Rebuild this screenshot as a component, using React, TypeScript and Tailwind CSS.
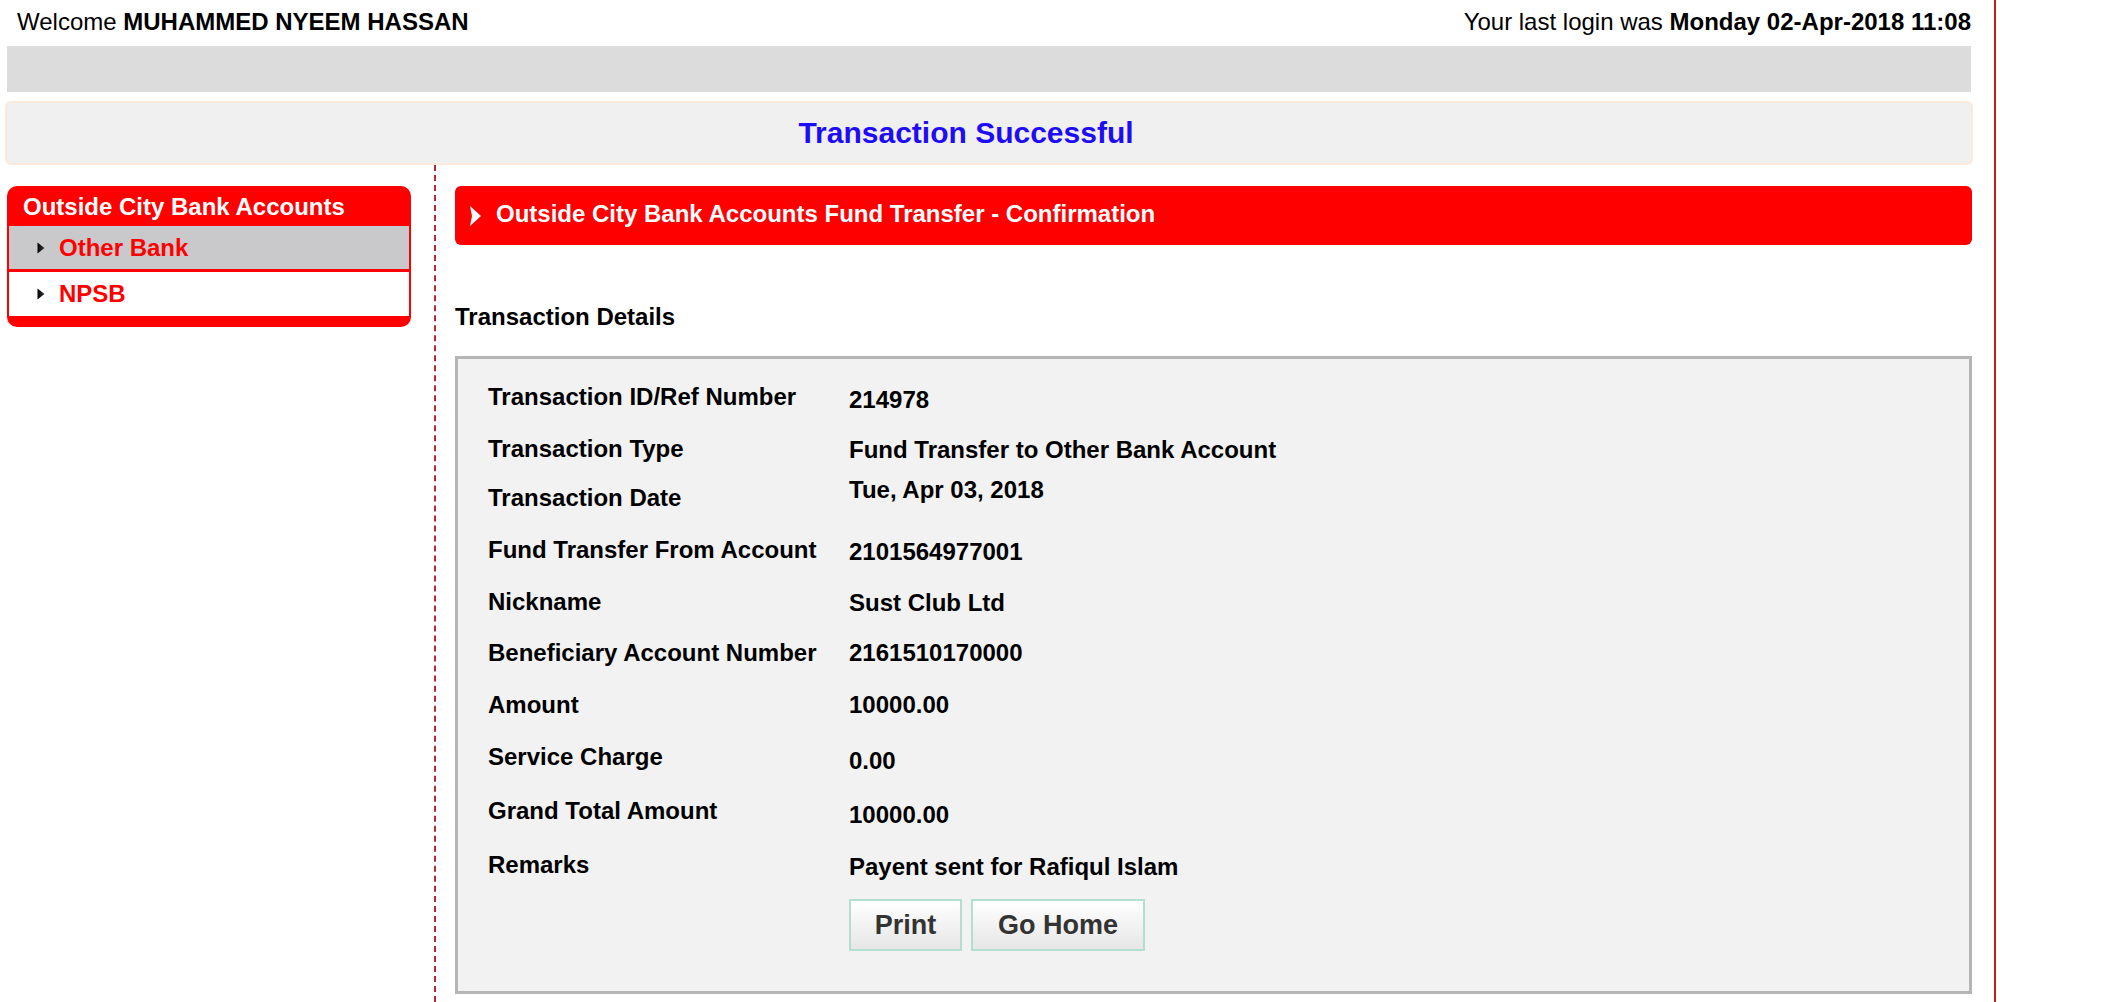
import React from "react";

type Row = { l: string; v: string; h: string; lp: string; vp: string };

const rows: Row[] = [
  { l: "Transaction ID/Ref Number", v: "214978", h: "h-[52px]", lp: "pt-[12px]", vp: "pt-[15px]" },
  { l: "Transaction Type", v: "Fund Transfer to Other Bank Account", h: "h-[50px]", lp: "pt-[12px]", vp: "pt-[13px]" },
  { l: "Transaction Date", v: "Tue, Apr 03, 2018", h: "h-[52px]", lp: "pt-[11px]", vp: "pt-[3px]" },
  { l: "Fund Transfer From Account", v: "2101564977001", h: "h-[52px]", lp: "pt-[11px]", vp: "pt-[13px]" },
  { l: "Nickname", v: "Sust Club Ltd", h: "h-[51px]", lp: "pt-[11px]", vp: "pt-[12px]" },
  { l: "Beneficiary Account Number", v: "2161510170000", h: "h-[52px]", lp: "pt-[11px]", vp: "pt-[11px]" },
  { l: "Amount", v: "10000.00", h: "h-[52px]", lp: "pt-[11px]", vp: "pt-[11px]" },
  { l: "Service Charge", v: "0.00", h: "h-[52px]", lp: "pt-[11px]", vp: "pt-[15px]" },
  { l: "Grand Total Amount", v: "10000.00", h: "h-[54px]", lp: "pt-[13px]", vp: "pt-[17px]" },
  { l: "Remarks", v: "Payent sent for Rafiqul Islam", h: "h-[54px]", lp: "pt-[13px]", vp: "pt-[15px]" },
];

function SmallArrow() {
  return (
    <svg width="8" height="12" viewBox="0 0 8 12" className="shrink-0">
      <defs>
        <linearGradient id="sa" x1="0" y1="0" x2="1" y2="0">
          <stop offset="0" stopColor="#000" />
          <stop offset="1" stopColor="#3a3a3a" />
        </linearGradient>
      </defs>
      <polygon points="0.5,0.5 7.5,6 0.5,11.5" fill="url(#sa)" />
    </svg>
  );
}

function HeaderArrow() {
  return (
    <svg width="13" height="22" viewBox="0 0 13 22" className="shrink-0">
      <defs>
        <filter id="bl" x="-40%" y="-30%" width="180%" height="160%">
          <feGaussianBlur stdDeviation="0.6" />
        </filter>
      </defs>
      <polygon points="1,1 12,11 1,21 3,11" fill="#ffffff" filter="url(#bl)" />
    </svg>
  );
}

function SideItem({ label, active }: { label: string; active?: boolean }) {
  return (
    <div
      className={
        active
          ? "flex items-center gap-[14px] h-[43px] pl-[28px] bg-[#c9c9cb]"
          : "flex items-center gap-[14px] h-[44px] pl-[28px] bg-white"
      }
    >
      <SmallArrow />
      <span className="font-bold text-[#ff0000] leading-[28px]">{label}</span>
    </div>
  );
}

export default function App() {
  return (
    <div className="flex min-h-[1002px] bg-white text-[24px] text-black font-['Liberation_Sans',Arial,sans-serif]">
      <div className="w-[1994px] shrink-0 flex flex-col">
        {/* Top welcome line */}
        <div className="flex justify-between pl-[17px] pr-[23px] pt-[8px] leading-[28px]">
          <div>
            Welcome <span className="font-bold">MUHAMMED NYEEM HASSAN</span>
          </div>
          <div>
            Your last login was <span className="font-bold">Monday 02-Apr-2018 11:08</span>
          </div>
        </div>

        {/* Grey bar */}
        <div className="ml-[7px] mt-[10px] w-[1964px] h-[46px] bg-[#dcdcdc]" />

        {/* Success message */}
        <div className="ml-[5px] mt-[9px] w-[1968px] h-[64px] rounded-[6px] border-2 border-[#fbeadb] bg-[#f0f0f0] flex items-center justify-center pr-[46px]">
          <span className="font-bold text-[30px] leading-[34px] text-[#1e0cf6]">Transaction Successful</span>
        </div>

        {/* Content */}
        <div className="flex flex-1 items-stretch">
          {/* Sidebar */}
          <div className="ml-[7px] w-[404px] pt-[21px]">
            <div className="rounded-[10px] border-2 border-[#ff0000] bg-[#ff0000] overflow-hidden pb-[9px]">
              <div className="h-[38px] pl-[14px] flex items-center font-bold text-white leading-[28px]">
                Outside City Bank Accounts
              </div>
              <SideItem label="Other Bank" active />
              <div className="h-[3px] bg-[#ff0000]" />
              <SideItem label="NPSB" />
            </div>
          </div>

          {/* Dashed divider */}
          <div className="ml-[23px] w-0 border-l-2 border-dashed border-[#b52a35]" />

          {/* Main */}
          <div className="ml-[19px] w-[1517px] pt-[21px]">
            <div className="h-[59px] rounded-[6px] bg-[#fe0000] flex items-center pl-[14px] gap-[14px]">
              <HeaderArrow />
              <span className="font-bold text-white leading-[28px] -mt-[4px]">
                Outside City Bank Accounts Fund Transfer - Confirmation
              </span>
            </div>

            <div className="mt-[58px] font-bold leading-[28px]">Transaction Details</div>

            <div className="mt-[25px] border-[3px] border-[#b5b5b5] bg-[#f2f2f2] pt-[12px] pb-[40px] pl-[30px]">
              {rows.map((r) => (
                <div key={r.l} className={`flex font-bold leading-[28px] ${r.h}`}>
                  <div className={`w-[361px] shrink-0 ${r.lp}`}>{r.l}</div>
                  <div className={r.vp}>{r.v}</div>
                </div>
              ))}
              <div className="flex gap-[9px] ml-[361px] mt-[7px]">
                <button className="w-[113px] h-[52px] border-2 border-[#b3dfd3] bg-gradient-to-b from-white to-[#e6e6e6] font-bold text-[27px] text-[#333] leading-[30px]">
                  Print
                </button>
                <button className="w-[174px] h-[52px] border-2 border-[#b3dfd3] bg-gradient-to-b from-white to-[#e6e6e6] font-bold text-[27px] text-[#333] leading-[30px]">
                  Go Home
                </button>
              </div>
            </div>
          </div>
        </div>
      </div>
      <div className="w-[2px] shrink-0 bg-[#b8202a]" />
    </div>
  );
}
